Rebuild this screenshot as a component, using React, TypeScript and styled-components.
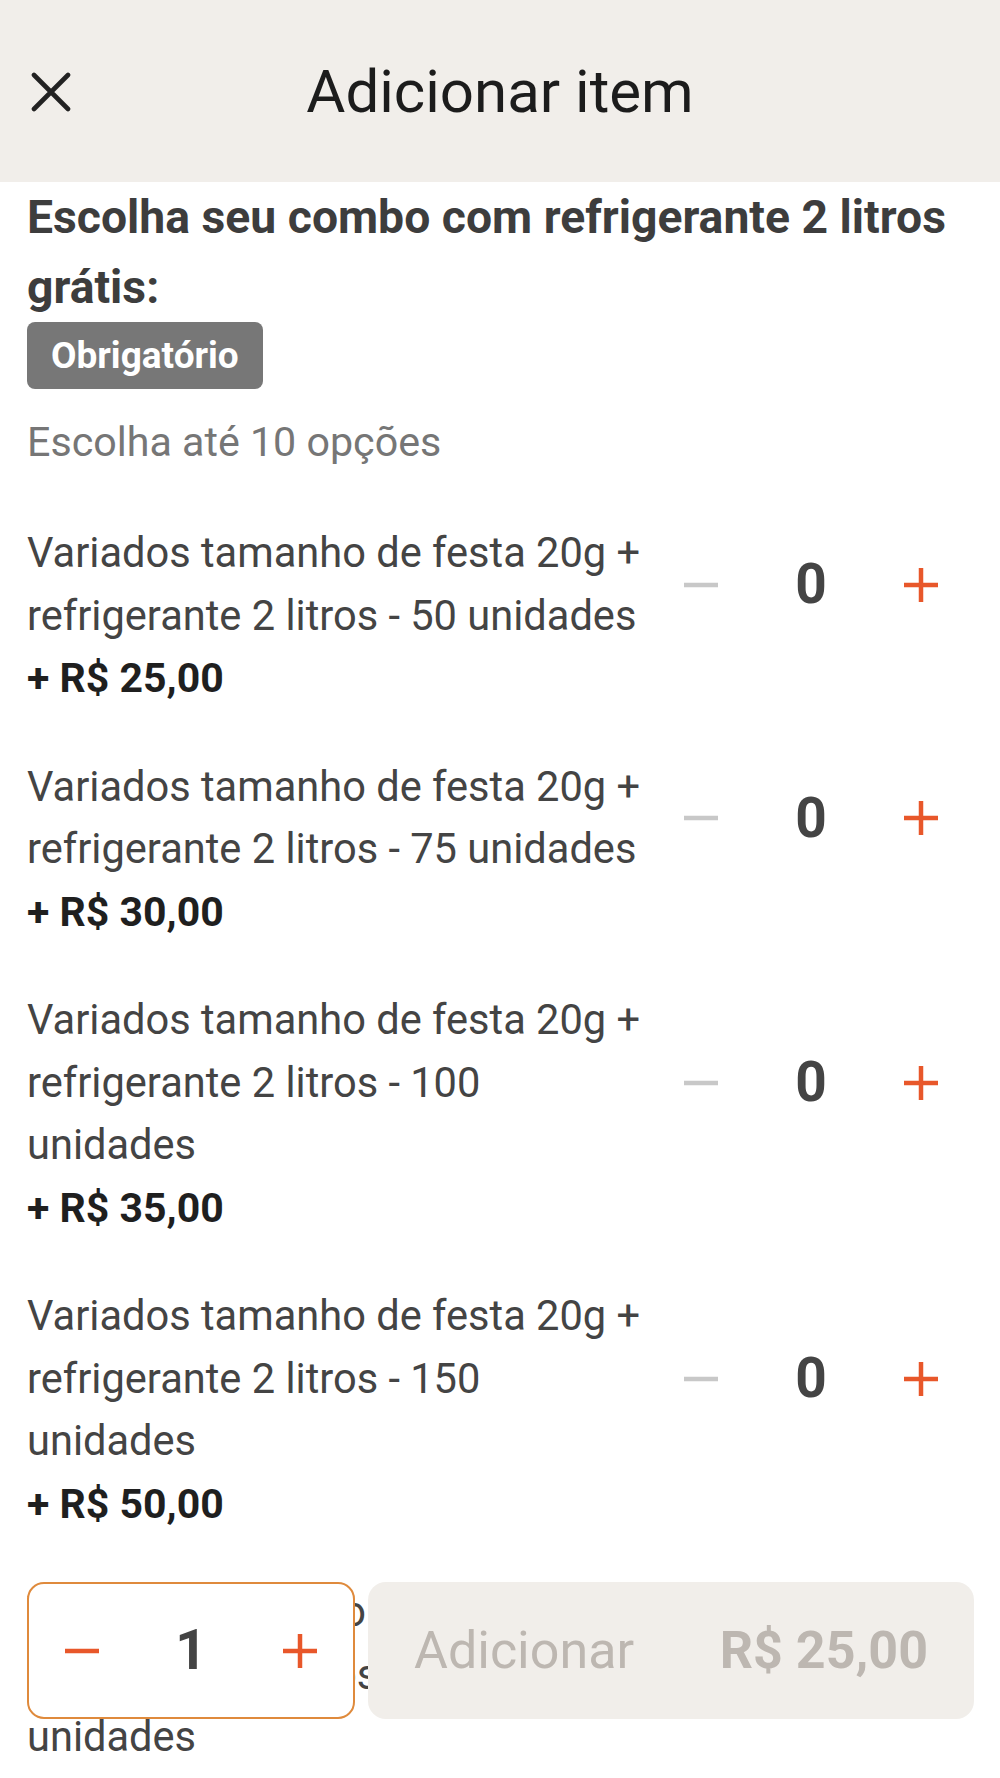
import React from "react";
import styled, { createGlobalStyle } from "styled-components";

const GlobalStyle = createGlobalStyle`
  html, body {
    margin: 0;
    padding: 0;
    background: #ffffff;
    font-family: Roboto, "Noto Sans", "Liberation Sans", sans-serif;
  }
  * {
    box-sizing: border-box;
  }
`;

interface OptionItem {
  id: number;
  name: string;
  price: string;
  qty: number;
}

const options: OptionItem[] = [
  { id: 1, name: "Variados tamanho de festa 20g + refrigerante 2 litros - 50 unidades", price: "+ R$ 25,00", qty: 0 },
  { id: 2, name: "Variados tamanho de festa 20g + refrigerante 2 litros - 75 unidades", price: "+ R$ 30,00", qty: 0 },
  { id: 3, name: "Variados tamanho de festa 20g + refrigerante 2 litros - 100 unidades", price: "+ R$ 35,00", qty: 0 },
  { id: 4, name: "Variados tamanho de festa 20g + refrigerante 2 litros - 150 unidades", price: "+ R$ 50,00", qty: 0 },
  { id: 5, name: "Variados tamanho de festa 20g + refrigerante 2 litros - 200 unidades", price: "+ R$ 60,00", qty: 0 },
];

const MinusIcon = ({ color }: { color: string }) => (
  <svg width="36" height="36" viewBox="0 0 36 36">
    <line x1="1" y1="18" x2="35" y2="18" stroke={color} strokeWidth="4.5" />
  </svg>
);

const PlusIcon = ({ color }: { color: string }) => (
  <svg width="36" height="36" viewBox="0 0 36 36">
    <line x1="1" y1="18" x2="35" y2="18" stroke={color} strokeWidth="4.5" />
    <line x1="18" y1="1" x2="18" y2="35" stroke={color} strokeWidth="4.5" />
  </svg>
);

const CloseIcon = () => (
  <svg width="40" height="40" viewBox="0 0 40 40">
    <path d="M3 3 L37 37 M37 3 L3 37" stroke="#222" strokeWidth="4.6" strokeLinecap="round" fill="none" />
  </svg>
);

export default function App() {
  return (
    <Screen>
      <GlobalStyle />
      <Header>
        <CloseButton aria-label="Fechar">
          <CloseIcon />
        </CloseButton>
        <HeaderTitle>Adicionar item</HeaderTitle>
        <span />
      </Header>

      <Content>
        <GroupTitle>Escolha seu combo com refrigerante 2 litros grátis:</GroupTitle>
        <Badge>Obrigatório</Badge>
        <Hint>Escolha até 10 opções</Hint>

        <OptionList>
          {options.map((o) => (
            <Option key={o.id}>
              <OptionName>{o.name}</OptionName>
              <Stepper>
                <IconButton aria-label="Diminuir">
                  <MinusIcon color="#c8c8c8" />
                </IconButton>
                <Count>{o.qty}</Count>
                <IconButton aria-label="Aumentar">
                  <PlusIcon color="#e8572a" />
                </IconButton>
              </Stepper>
              <OptionPrice>{o.price}</OptionPrice>
            </Option>
          ))}
        </OptionList>
      </Content>

      <Footer>
        <QtyBox>
          <IconButton aria-label="Diminuir">
            <MinusIcon color="#e8572a" />
          </IconButton>
          <Count>1</Count>
          <IconButton aria-label="Aumentar">
            <PlusIcon color="#e8572a" />
          </IconButton>
        </QtyBox>
        <AddButton disabled>
          <span>Adicionar</span>
          <AddPrice>R$ 25,00</AddPrice>
        </AddButton>
      </Footer>
    </Screen>
  );
}

const Screen = styled.div`
  position: relative;
  height: 100vh;
  overflow: hidden;
  background: #ffffff;
`;

const Header = styled.header`
  height: 182px;
  background: #f1eeea;
  display: grid;
  grid-template-columns: 1fr auto 1fr;
  align-items: center;
  padding: 0 31px;
`;

const CloseButton = styled.button`
  width: 40px;
  height: 40px;
  padding: 0;
  border: none;
  background: transparent;
  display: flex;
  margin-top: 2px;
`;

const HeaderTitle = styled.h1`
  margin: 0;
  font-size: 60px;
  font-weight: 400;
  color: #1c1c1c;
`;

const Content = styled.main`
  padding: 0 27px;
`;

const GroupTitle = styled.h2`
  margin: 0;
  font-size: 46.3px;
  line-height: 70px;
  font-weight: 700;
  color: #3d3d3d;
`;

const Badge = styled.div`
  display: inline-flex;
  align-items: center;
  height: 67px;
  padding: 0 24px;
  border-radius: 8px;
  background: #777777;
  color: #ffffff;
  font-size: 37px;
  font-weight: 700;
`;

const Hint = styled.p`
  margin: 22px 0 0;
  font-size: 41.2px;
  line-height: 62px;
  color: #767676;
`;

const OptionList = styled.div`
  display: flex;
  flex-direction: column;
  gap: 46px;
  margin-top: 49px;
`;

const Option = styled.div`
  display: grid;
  grid-template-columns: 623px auto;
  column-gap: 33px;
`;

const OptionName = styled.div`
  grid-column: 1;
  grid-row: 1;
  font-size: 41.6px;
  line-height: 62.5px;
  color: #444444;
`;

const OptionPrice = styled.div`
  grid-column: 1;
  grid-row: 2;
  font-size: 41px;
  line-height: 62.5px;
  font-weight: 700;
  color: #1f1f1f;
`;

const Stepper = styled.div`
  grid-column: 2;
  grid-row: 1;
  align-self: center;
  display: grid;
  grid-template-columns: 36px 60px 36px;
  align-items: center;
  column-gap: 62px;
`;

const IconButton = styled.button`
  width: 36px;
  height: 36px;
  padding: 0;
  border: none;
  background: transparent;
  display: flex;
  align-items: center;
  justify-content: center;
`;

const Count = styled.span`
  width: 60px;
  text-align: center;
  font-size: 55px;
  font-weight: 700;
  color: #444444;
  line-height: 1;
`;

const Footer = styled.footer`
  position: absolute;
  left: 27px;
  right: 26px;
  bottom: 59px;
  height: 137px;
  display: flex;
  gap: 13px;
`;

const QtyBox = styled.div`
  width: 328px;
  height: 100%;
  background: #ffffff;
  border: 2.5px solid #df8a3c;
  border-radius: 17px;
  display: flex;
  align-items: center;
  justify-content: space-between;
  padding: 0 35px;
`;

const AddButton = styled.button`
  flex: 1;
  height: 100%;
  border: none;
  border-radius: 18px;
  background: #f1eeea;
  display: flex;
  align-items: center;
  justify-content: space-between;
  padding: 0 46px;
  font-family: Roboto, "Noto Sans", "Liberation Sans", sans-serif;
  font-size: 52px;
  font-weight: 400;
  color: #bdb7b1;
`;

const AddPrice = styled.span`
  font-weight: 700;
`;
